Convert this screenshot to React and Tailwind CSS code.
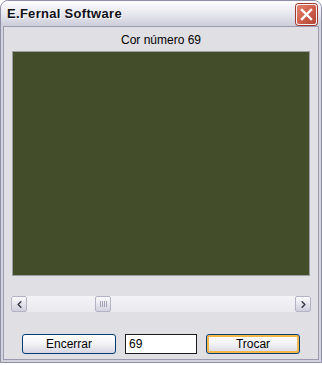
import { ChevronLeft, ChevronRight } from 'lucide-react';

export default function App() {
  return (
    <div className="w-[322px] h-[365px] bg-white" style={{ fontFamily: '"Liberation Sans", Arial, sans-serif' }}>
      <div className="w-[322px] h-[363px] flex flex-col rounded-t-[8px] border border-[#8f8ea8] bg-[#d3d3de] overflow-hidden">
        {/* Title bar */}
        <div className="h-[25px] shrink-0 flex items-center justify-between pl-[6px] pr-[4px] bg-gradient-to-b from-[#fdfdfe] via-[#e8e8ef] to-[#cdcddb]">
          <span className="text-[13px] font-bold text-[#101018] tracking-[0.3px] [text-shadow:1px_1px_0_#ffffff]">
            E.Fernal Software
          </span>
          <div className="w-[21px] h-[21px] mt-[1px] rounded-[3px] border border-[#f4f4f8] bg-gradient-to-br from-[#e2826f] via-[#d0604d] to-[#b24536] flex items-center justify-center shadow-[0_0_0_1px_#a23a30]">
            <svg width="13" height="13" viewBox="0 0 13 13">
              <path d="M2 2 L11 11 M11 2 L2 11" stroke="#ffffff" strokeWidth="2.4" strokeLinecap="square" />
            </svg>
          </div>
        </div>

        {/* Client area */}
        <div className="flex-1 mx-[2px] mb-[2px] border border-[#9b9aae] bg-[#e0dfe3] flex flex-col px-[7px]">
          <div className="h-[24px] flex items-center justify-center text-[12px] text-black pt-[2px]">
            Cor número 69
          </div>
          <div className="h-[225px] mx-px border border-[#9d9da4] bg-[#434d29]" />

          {/* Scrollbar */}
          <div className="mt-[20px] h-[16px] flex items-center bg-gradient-to-b from-[#f3f3f6] to-[#ebebef]">
            <div className="w-[16px] h-[16px] rounded-[2px] border border-[#b5b4c7] bg-gradient-to-b from-[#fbfbfd] to-[#cfcedc] flex items-center justify-center">
              <ChevronLeft size={11} strokeWidth={3.2} className="text-[#363646]" />
            </div>
            <div className="flex-1 flex">
              <div className="ml-[68px] w-[16px] h-[16px] rounded-[2px] border border-[#b5b4c7] bg-gradient-to-b from-[#fbfbfd] to-[#d3d2df] flex items-center justify-center gap-px">
                <span className="w-px h-[6px] bg-[#a4a3b6]" />
                <span className="w-px h-[6px] bg-[#a4a3b6]" />
                <span className="w-px h-[6px] bg-[#a4a3b6]" />
                <span className="w-px h-[6px] bg-[#a4a3b6]" />
              </div>
            </div>
            <div className="w-[16px] h-[16px] rounded-[2px] border border-[#b5b4c7] bg-gradient-to-b from-[#fbfbfd] to-[#cfcedc] flex items-center justify-center">
              <ChevronRight size={11} strokeWidth={3.2} className="text-[#363646]" />
            </div>
          </div>

          {/* Buttons */}
          <div className="mt-[22px] flex items-center pl-[11px]">
            <button className="w-[94px] h-[20px] rounded-[3px] border border-[#003c74] bg-gradient-to-b from-[#ffffff] via-[#f2f2f5] to-[#d6d5e2] text-[12px] text-black leading-none">
              Encerrar
            </button>
            <div className="ml-[9px] w-[72px] h-[20px] border border-[#1c1c1c] bg-white text-[12px] text-black flex items-center pl-[3px]">
              69
            </div>
            <button className="ml-[9px] w-[94px] h-[20px] rounded-[3px] border border-[#003c74] bg-gradient-to-b from-[#ffffff] via-[#f2f2f5] to-[#d6d5e2] text-[12px] text-black leading-none shadow-[inset_0_0_0_2px_#f5b747]">
              Trocar
            </button>
          </div>
        </div>
      </div>
    </div>
  );
}
